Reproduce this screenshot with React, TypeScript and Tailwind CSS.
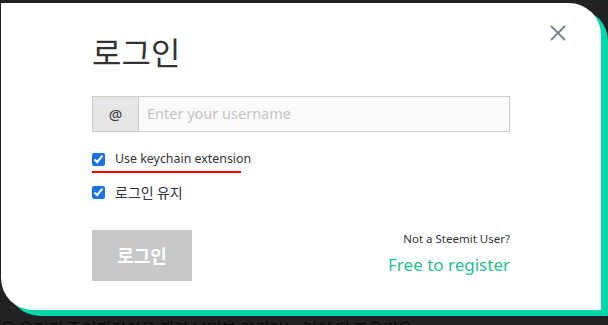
import React from 'react';

const font = { fontFamily: '"Source Sans Pro", "Noto Sans", "Noto Sans CJK KR", sans-serif' };
const kr = { fontFamily: '"Noto Sans CJK KR", sans-serif' };

export default function App() {
  return (
    <div className="w-[608px] h-[325px] overflow-hidden bg-[#222222] pt-[3px] pl-[1px]" style={font}>
      <div className="relative w-[600px] h-[307px] bg-white rounded-tr-[32px] rounded-bl-[32px] shadow-[7px_6px_0_#06d6a9]">
        <button className="absolute right-[34px] top-[21px] text-[#788187]" aria-label="close">
          <svg width="18" height="18" viewBox="0 0 18 18" fill="none" stroke="currentColor" strokeWidth="1.8">
            <path d="M2 2l14 14M16 2L2 16" />
          </svg>
        </button>
        <div className="pl-[91px] pt-[26px] w-[509px]">
          <h1 className="text-[32px] leading-[44px] text-[#333] font-normal" style={kr}>
            로그인
          </h1>
          <div className="mt-[23px] flex h-[36px] border border-[#cacaca]">
            <div className="w-[46px] flex items-center justify-center bg-[#e6e6e6] border-r border-[#cacaca] text-[15px] text-[#333]">
              @
            </div>
            <input
              className="flex-1 bg-[#fafafa] px-[8px] text-[14.5px] text-[#333] outline-none placeholder:text-[#c3c3c3]"
              placeholder="Enter your username"
            />
          </div>
          <label className="mt-[18px] flex items-center gap-[10px] text-[12.4px] text-[#333]">
            <input type="checkbox" defaultChecked className="w-[13px] h-[13px] m-0 accent-[#1a73e8]" />
            <span>Use keychain extension</span>
          </label>
          <div className="mt-[2px] w-[149px] h-[2px] bg-[#ff0000]"></div>
          <label className="mt-[9px] flex items-center gap-[10px] text-[14px] text-[#333]" style={kr}>
            <input type="checkbox" defaultChecked className="w-[13px] h-[13px] m-0 accent-[#1a73e8]" />
            <span>로그인 유지</span>
          </label>
          <div className="mt-[27px] flex justify-between items-start">
            <button className="w-[100px] h-[51px] bg-[#c7c8ca] text-white text-[18px] font-bold" style={kr}>
              로그인
            </button>
            <div className="text-right pt-[1px]">
              <div className="text-[11.5px] leading-[16px] text-[#333]">Not a Steemit User?</div>
              <div className="mt-[6px] text-[17px] leading-[24px] text-[#1fbf8f]">Free to register</div>
            </div>
          </div>
        </div>
      </div>
      <div className="mt-[6px] whitespace-nowrap text-[16px] text-[#050505]" style={kr}>
        을 오려면 중이피려이오 개기 보티부 린키아느 거이 되 조오기요
      </div>
    </div>
  );
}
